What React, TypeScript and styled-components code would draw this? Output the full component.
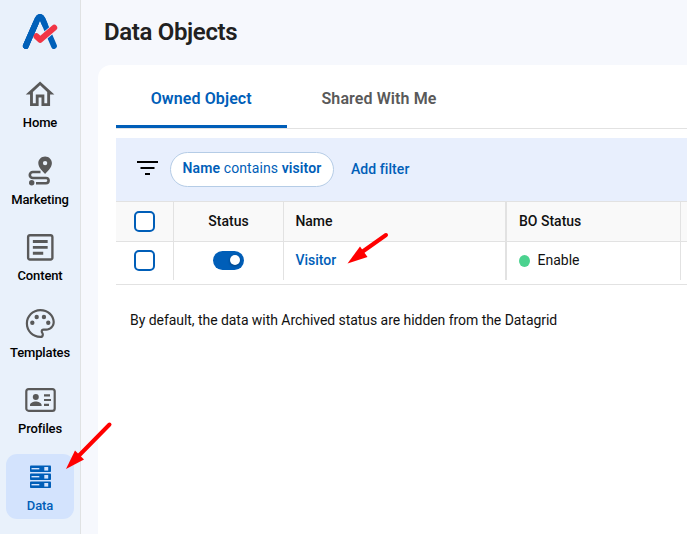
import React from "react";
import styled, { createGlobalStyle, css } from "styled-components";

const blue = "#005eb8";
const grey = "#595959";
const line = "#e2e2e2";

const GlobalStyle = createGlobalStyle`
  * { box-sizing: border-box; }
  body { margin: 0; background: #f6f8fd; font-family: Roboto, "Liberation Sans", sans-serif; color: #000; overflow: hidden; }
`;

const Shell = styled.div`
  position: relative;
  display: flex;
  width: 687px;
  height: 534px;
  overflow: hidden;
`;

const Sidebar = styled.nav`
  flex: 0 0 81px;
  display: flex;
  flex-direction: column;
  background: #e9f1fb;
  border-right: 1px solid #e0e2e3;
  padding: 14px 6px 0;
`;

const LogoWrap = styled.div`
  height: 57px;
  padding-left: 16px;
  svg { display: block; }
`;

const NavList = styled.div`
  display: flex;
  flex-direction: column;
  gap: 11.6px;
`;

const NavItem = styled.a<{ $active?: boolean }>`
  display: flex;
  flex-direction: column;
  align-items: center;
  width: 68px;
  height: 65px;
  border-radius: 11px;
  font-size: 13px;
  line-height: 16px;
  font-weight: 500;
  letter-spacing: -0.13px;
  color: ${(p) => (p.$active ? blue : "#000")};
  background: ${(p) => (p.$active ? "#d3e3fd" : "transparent")};
  svg { display: block; flex: none; margin: 5px 0 3px; fill: ${(p) => (p.$active ? blue : grey)}; overflow: visible; }
`;

const Main = styled.main`
  flex: 1;
  min-width: 0;
  padding-left: 17px;
`;

const Title = styled.h1`
  margin: 0;
  height: 65px;
  padding-left: 6px;
  font-size: 24px;
  line-height: 64px;
  font-weight: 600;
  letter-spacing: -0.35px;
  color: #212121;
`;

const Card = styled.section`
  height: 469px;
  background: #fff;
  border-top-left-radius: 13px;
  padding-left: 18px;
`;

const Tabs = styled.div`
  display: flex;
  height: 64px;
  border-bottom: 1px solid ${line};
`;

const Tab = styled.button<{ $active?: boolean }>`
  width: ${(p) => (p.$active ? 170.5 : 185)}px;
  height: 63px;
  padding: 8px 0 0;
  border: 0;
  border-bottom: 3px solid ${(p) => (p.$active ? blue : "transparent")};
  background: none;
  font: 600 16px/20px Roboto, sans-serif;
  letter-spacing: 0.1px;
  color: ${(p) => (p.$active ? blue : grey)};
`;

const FilterBar = styled.div`
  display: flex;
  align-items: center;
  height: 63px;
  margin-top: 9px;
  padding-left: 21px;
  background: #e8effd;
`;

const FilterGlyph = styled.svg`
  margin-bottom: 4px;
`;

const Chip = styled.div`
  display: flex;
  justify-content: center;
  width: 164px;
  height: 35px;
  margin-left: 12px;
  border: 1px solid #b5cce6;
  border-radius: 18px;
  background: #fff;
  color: ${blue};
  font-size: 14px;
  line-height: 31px;
  letter-spacing: 0.1px;
  white-space: pre;
  b { font-weight: 600; }
`;

const AddFilter = styled.a`
  margin: 0 0 2px 17px;
  color: ${blue};
  font-size: 14px;
  font-weight: 500;
  letter-spacing: 0.07px;
`;

const cols = css`
  display: grid;
  grid-template-columns: 58px 110px 223px 174px 1fr;
`;

const HeaderRow = styled.div`
  ${cols}
  height: 41px;
  background: #f9f9f9;
  border-top: 1px solid ${line};
  border-bottom: 1px solid ${line};
`;

const DataRow = styled.div`
  ${cols}
  height: 43px;
  padding-bottom: 4px;
  border-bottom: 1px solid ${line};
`;

const Cell = styled.div<{ $center?: boolean; $wide?: boolean; $last?: boolean; $head?: boolean; $link?: boolean }>`
  display: flex;
  align-items: center;
  justify-content: ${(p) => (p.$center ? "center" : "flex-start")};
  padding-left: ${(p) => (p.$center ? 0 : p.$wide ? 11.4 : 12)}px;
  border-right: ${(p) => (p.$last ? "0" : p.$wide ? `2px solid ${line}` : `1px solid ${line}`)};
  font-size: 14px;
  font-weight: ${(p) => (p.$head || p.$link ? 500 : 400)};
  color: ${(p) => (p.$link ? blue : "#111")};
  padding-bottom: ${(p) => (p.$head ? 1 : 2)}px;
`;

const Checkbox = styled.span`
  width: 21px;
  height: 21px;
  border: 2px solid ${blue};
  border-radius: 5px;
  background: #fff;
`;

const Toggle = styled.span`
  display: flex;
  align-items: center;
  justify-content: flex-end;
  width: 31px;
  height: 19px;
  padding-right: 4px;
  border-radius: 10px;
  background: ${blue};
  &::after { content: ""; width: 10px; height: 10px; border-radius: 50%; background: #fff; box-shadow: 0 1px 3px rgba(0, 0, 0, 0.35); }
`;

const Dot = styled.span`
  width: 11px;
  height: 12px;
  margin: 1px 7.5px 0 0;
  border-radius: 50%;
  background: #4bd28f;
`;

const Note = styled.p`
  margin: 27px 0 0 14px;
  font-size: 14px;
  line-height: 17px;
  letter-spacing: -0.05px;
  color: #111;
`;

const Arrows = styled.svg`
  position: absolute;
  inset: 0;
  pointer-events: none;
`;

const Logo = () => (
  <svg width="36" height="36" viewBox="0 0 36 36" fill="none" strokeLinecap="round" strokeLinejoin="round">
    <path d="M3.8 32 15.4 5.4q2.6-5.2 5.2 0L32 32" stroke="#0060b9" strokeWidth="5.8" />
    <path d="m14 22 4.2 3.9L36 10.6" stroke="#e9f1fb" strokeWidth="7.4" strokeLinecap="butt" />
    <path d="M3.8 32 15.4 5.4q2.6-5.2 5.2 0L22.6 10" stroke="#0060b9" strokeWidth="5.8" />
    <path d="m14.4 22.2 3.8 3.6L32.2 13.8" stroke="#f13545" strokeWidth="6" />
    <path d="M3.8 32 13.6 9.6" stroke="#0060b9" strokeWidth="5.8" />
  </svg>
);

const HomeIcon = () => (
  <svg width="36" height="36" viewBox="0 0 36 36">
    <path transform="translate(.9 1.1) scale(1.43 1.45)" d="m12 5.69 5 4.5V18h-2v-6H9v6H7v-7.81l5-4.5M12 3 2 12h3v8h6v-6h2v6h6v-8h3L12 3z" />
  </svg>
);

const MarketingIcon = () => (
  <svg width="36" height="36" viewBox="0 0 36 36">
    <path fillRule="evenodd" d="M23.1 3.4c3.8 0 6.8 2.9 6.8 6.7 0 4.9-4.9 8.6-6.8 10.9-1.9-2.3-6.8-6-6.8-10.9 0-3.8 3-6.7 6.8-6.7Zm0 4.5a2.2 2.2 0 1 0 0 4.4 2.2 2.2 0 0 0 0-4.4Z" />
    <path d="M18.5 19H10.8a3 3 0 0 0 0 6H24a2.6 2.6 0 0 1 0 5.2H14" fill="none" stroke={grey} strokeWidth="2.6" />
    <circle cx="9.7" cy="29.7" r="2.7" />
  </svg>
);

const ContentIcon = () => (
  <svg width="36" height="36" viewBox="0 0 36 36">
    <path transform="translate(.5 .6) scale(1.48)" d="M19 4.6c.2 0 .4.2.4.4v14c0 .2-.2.4-.4.4H5a.4.4 0 0 1-.4-.4V5c0-.2.2-.4.4-.4h14M19 3H5c-1.1 0-2 .9-2 2v14c0 1.1.9 2 2 2h14c1.1 0 2-.9 2-2V5c0-1.1-.9-2-2-2zM14 17H7v-2h7v2zm3-4H7v-2h10v2zm0-4H7V7h10v2z" />
  </svg>
);

const PaletteIcon = () => (
  <svg width="36" height="36" viewBox="0 0 36 36">
    <g transform="translate(.9 .1) scale(1.45)">
      <path d="M12 22C6.49 22 2 17.51 2 12S6.49 2 12 2s10 4.04 10 9c0 3.31-2.69 6-6 6h-1.77c-.28 0-.5.22-.5.5 0 .12.05.23.13.33.41.47.64 1.06.64 1.67A2.5 2.5 0 0 1 12 22zm0-18.5c-4.7 0-8.5 3.8-8.5 8.5s3.8 8.5 8.5 8.5c.6 0 1-.4 1-1a1 1 0 0 0-.24-.65c-.35-.4-.53-.85-.53-1.35a2 2 0 0 1 2-2H16c2.5 0 4.5-2 4.5-4.5 0-4.1-3.8-7.5-8.5-7.5z" />
      <circle cx="6.5" cy="11.5" r="1.5" />
      <circle cx="9.5" cy="7.5" r="1.5" />
      <circle cx="14.5" cy="7.5" r="1.5" />
      <circle cx="17.5" cy="11.5" r="1.5" />
    </g>
  </svg>
);

const ProfileIcon = () => (
  <svg width="36" height="36" viewBox="0 0 36 36">
    <rect x="4.3" y="7.2" width="28.4" height="21.6" rx="2.4" fill="none" stroke={grey} strokeWidth="2.2" />
    <circle cx="13.8" cy="15" r="3" />
    <path d="M8 24v-1c0-2.3 3.5-3.6 5.8-3.6s5.8 1.3 5.8 3.6v1ZM22 12.2h6v2.2h-6Zm0 4.7h7v2.2h-7Zm0 4.8h5v2.2h-5Z" />
  </svg>
);

const DataIcon = () => (
  <svg width="36" height="36" viewBox="0 0 36 36">
    {[6.5, 14.5, 22.5].map((y) => (
      <g key={y}>
        <rect x="8" y={y} width="21" height="6.6" rx="0.8" />
        <path d={`M9.5 ${y + 2.5}h7.8v1.4H9.5Z`} fill="#d3e3fd" />
        <path d={`M22.3 ${y + 1.5}h3.9v3.6h-3.9Z`} fill="#d3e3fd" />
      </g>
    ))}
  </svg>
);

const FilterIcon = () => (
  <FilterGlyph width="21" height="14" viewBox="0 0 21 14">
    <path d="M0 0h21v2H0ZM3.5 6h14v2h-14ZM8 12h5v2H8Z" />
  </FilterGlyph>
);

const navItems = [
  { label: "Home", Icon: HomeIcon },
  { label: "Marketing", Icon: MarketingIcon },
  { label: "Content", Icon: ContentIcon },
  { label: "Templates", Icon: PaletteIcon },
  { label: "Profiles", Icon: ProfileIcon },
  { label: "Data", Icon: DataIcon, active: true },
];

export default function App() {
  return (
    <Shell>
      <GlobalStyle />
      <Sidebar>
        <LogoWrap><Logo /></LogoWrap>
        <NavList>
          {navItems.map(({ label, Icon, active }) => (
            <NavItem key={label} $active={active}><Icon />{label}</NavItem>
          ))}
        </NavList>
      </Sidebar>
      <Main>
        <Title>Data Objects</Title>
        <Card>
          <Tabs>
            <Tab $active>Owned Object</Tab>
            <Tab>Shared With Me</Tab>
          </Tabs>
          <FilterBar>
            <FilterIcon />
            <Chip><b>Name</b> contains <b>visitor</b></Chip>
            <AddFilter>Add filter</AddFilter>
          </FilterBar>
          <HeaderRow>
            <Cell $center $head><Checkbox /></Cell>
            <Cell $center $head>Status</Cell>
            <Cell $head $wide>Name</Cell>
            <Cell $head>BO Status</Cell>
            <Cell $last />
          </HeaderRow>
          <DataRow>
            <Cell $center><Checkbox /></Cell>
            <Cell $center><Toggle /></Cell>
            <Cell $link $wide>Visitor</Cell>
            <Cell><Dot />Enable</Cell>
            <Cell $last />
          </DataRow>
          <Note>By default, the data with Archived status are hidden from the Datagrid</Note>
        </Card>
      </Main>
      <Arrows width="687" height="534" fill="#f00" stroke="#f00">
        <path d="M386 235 362 252" strokeWidth="4" strokeLinecap="round" />
        <path d="m347.5 263.5 12.5-17 7.5 10.5Z" stroke="none" />
        <path d="M109.5 424.5 79 455.5" strokeWidth="4" strokeLinecap="round" />
        <path d="m66 469 9-18.5 9 9Z" stroke="none" />
      </Arrows>
    </Shell>
  );
}
